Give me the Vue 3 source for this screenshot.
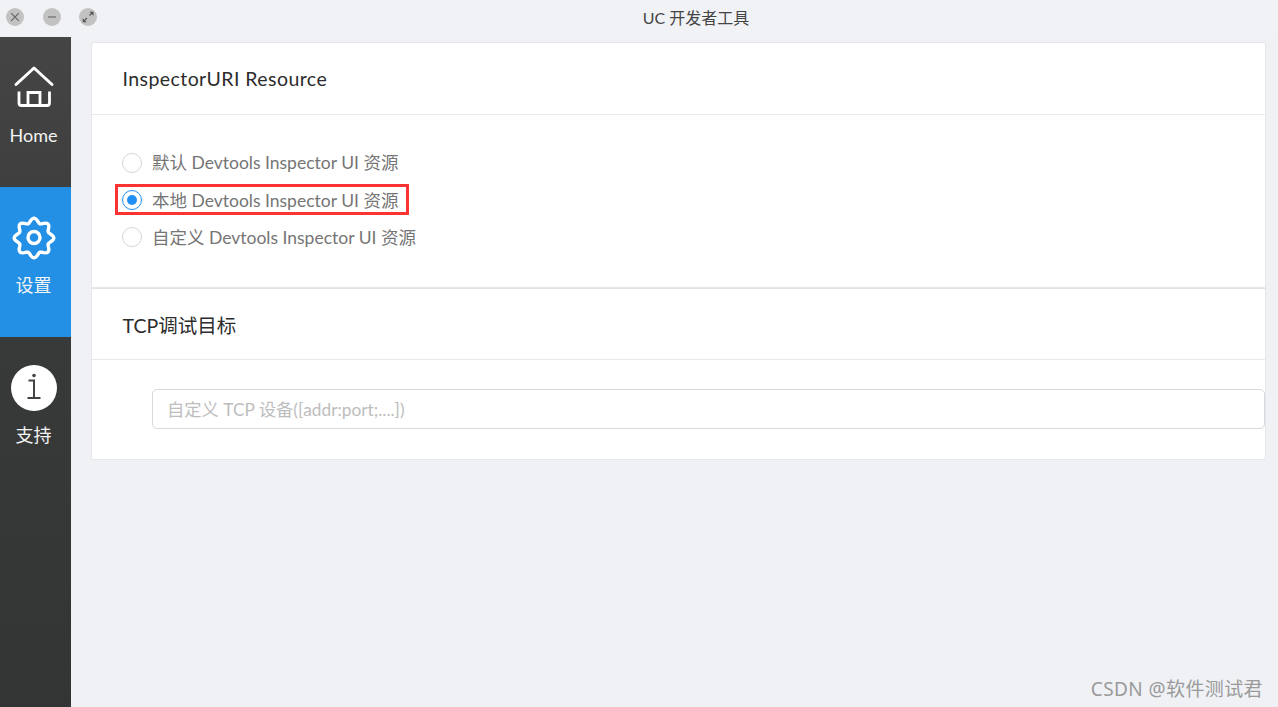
<script setup>
const navItems = [
  { key: 'home', label: 'Home' },
  { key: 'gear', label: '设置', active: true },
  { key: 'info', label: '支持' },
]
const radios = [
  { label: '默认 Devtools Inspector UI 资源' },
  { label: '本地 Devtools Inspector UI 资源', checked: true, marked: true },
  { label: '自定义 Devtools Inspector UI 资源' },
]
const gearPath = (() => {
  const pts = []
  for (let i = 0; i < 96; i++) {
    const a = (i / 96) * Math.PI * 2
    const r = 17.6 + 2.2 * Math.cos(8 * a)
    pts.push(`${(23 + r * Math.sin(a)).toFixed(2)} ${(23 - r * Math.cos(a)).toFixed(2)}`)
  }
  return 'M' + pts.join('L') + 'Z'
})()
</script>

<template>
  <div class="window">
    <header class="titlebar">
      <div class="lights">
        <span class="light">
          <svg width="18" height="18" viewBox="0 0 18 18"><path d="M5.2 5.2l7.6 7.6M12.8 5.2l-7.6 7.6" stroke="#666" stroke-width="1.2" fill="none"/></svg>
        </span>
        <span class="light">
          <svg width="18" height="18" viewBox="0 0 18 18"><path d="M5 9h8" stroke="#777" stroke-width="1.4" fill="none"/></svg>
        </span>
        <span class="light">
          <svg width="18" height="18" viewBox="0 0 18 18"><path d="M10.5 7.5l3-3M5 13l3-3" stroke="#555" stroke-width="1.1" fill="none"/><path d="M10.5 3.7h4v4zM3.7 10.2v4h4z" fill="#555"/></svg>
        </span>
      </div>
      <div class="title">UC 开发者工具</div>
    </header>
    <div class="body">
      <nav class="sidebar">
        <div v-for="item in navItems" :key="item.key" class="nav-item" :class="{ active: item.active }">
          <svg v-if="item.key === 'home'" class="nav-icon" width="46" height="46" viewBox="10.500 65 46 46" fill="none" stroke="#fff">
            <path d="M15.500 84.500L33.500 68L51.500 84.500" stroke-width="3" stroke-linecap="round" stroke-linejoin="round"/>
            <path d="M18.500 91.500V103Q18.500 105.500 21 105.500H46.500Q49 105.500 49 103V91.500" stroke-width="2.800"/>
            <path d="M27.500 105V92.500H39.500V105" stroke-width="2.800"/>
          </svg>
          <svg v-else-if="item.key === 'gear'" class="nav-icon" width="46" height="46" viewBox="0 0 46 46" fill="none" stroke="#fff" stroke-width="3.400">
            <path stroke-linejoin="round" :d="gearPath"/>
            <circle cx="23" cy="22.500" r="6"/>
          </svg>
          <svg v-else class="nav-icon" width="46" height="46" viewBox="10.500 364 46 46">
            <circle cx="33.500" cy="387" r="23" fill="#fff"/>
            <circle cx="33.500" cy="374.500" r="1.800" fill="#444"/>
            <path d="M28 379.500H33.500V397M27 397H40" stroke="#444" stroke-width="2" fill="none"/>
          </svg>
          <span class="nav-label">{{ item.label }}</span>
        </div>
      </nav>
      <main class="main">
        <section class="card first">
          <h2 class="card-title resource">InspectorURI Resource</h2>
          <div class="radio-list">
            <label v-for="r in radios" :key="r.label" class="radio-row" :class="{ marked: r.marked }">
              <span class="radio" :class="{ checked: r.checked }"></span>
              <span class="radio-text">{{ r.label }}</span>
            </label>
          </div>
        </section>
        <section class="card second">
          <h2 class="card-title">TCP调试目标</h2>
          <div class="input-wrap">
            <input class="tcp-input" type="text" placeholder="自定义 TCP 设备([addr:port;....])" />
          </div>
        </section>
        <div class="watermark">CSDN @软件测试君</div>
      </main>
    </div>
  </div>
</template>

<style>
html, body { margin: 0; padding: 0; background: #eff0f5; overflow: hidden; }
</style>

<style scoped>
.window {
  width: 1278px;
  height: 707px;
  display: flex;
  flex-direction: column;
  background: #eff1f5;
  font-family: Lato, "Noto Sans CJK SC", sans-serif;
  overflow: hidden;
}
.titlebar {
  height: 37px;
  flex: none;
  box-sizing: border-box;
  padding: 0 0 3px 114px;
  position: relative;
  display: flex;
  align-items: center;
  justify-content: center;
  background: #f1f2f6;
}
.lights {
  position: absolute;
  left: 6px;
  top: 8px;
  display: flex;
  gap: 18.500px;
}
.light {
  width: 18px;
  height: 18px;
  border-radius: 50%;
  background: #c2c2c2;
  display: block;
}
.light svg { display: block; }
.title {
  font-size: 16px;
  color: #444;
}
.body {
  flex: 1;
  display: flex;
  min-height: 0;
}
.sidebar {
  width: 71px;
  flex: none;
  background: linear-gradient(180deg, #444544 0%, #383a39 45%, #333534 100%);
}
.nav-item {
  height: 150px;
  box-sizing: border-box;
  padding: 28px 4px 0 0;
  display: flex;
  flex-direction: column;
  align-items: center;
  color: #fff;
}
.nav-item.active { background: #2390e6; }
.nav-icon { display: block; flex: none; overflow: visible; }
.nav-label {
  margin-top: 12px;
  font-size: 18px;
  line-height: 24px;
  color: #f4f4f4;
}
.main {
  flex: 1;
  position: relative;
  padding: 5px 12px 0 20px;
}
.card {
  background: #fff;
  box-sizing: border-box;
  border: 1px solid #e6e7ea;
}
.card.first {
  height: 246px;
  border-radius: 3px 3px 0 0;
}
.card.second {
  height: 172px;
  border-top: 1px solid #e2e3e6;
  border-radius: 0 0 3px 3px;
}
.card-title {
  margin: 0;
  height: 72px;
  box-sizing: border-box;
  padding: 0 0 0 30.500px;
  display: flex;
  align-items: center;
  font-size: 19.500px;
  font-weight: 400;
  color: #2c2c2c;
  border-bottom: 1px solid #e8e9ec;
}
.card-title.resource { letter-spacing: 0.430px; }
.second .card-title { height: 71px; }
.radio-list {
  padding-top: 29px;
  display: flex;
  flex-direction: column;
}
.radio-row {
  position: relative;
  height: 37.400px;
  display: flex;
  align-items: center;
  padding-left: 30px;
}
.radio-row.marked::after {
  content: "";
  position: absolute;
  left: 23px;
  top: 3px;
  width: 294px;
  height: 31px;
  box-sizing: border-box;
  border: 3px solid #fb3333;
}
.radio {
  width: 20px;
  height: 20px;
  box-sizing: border-box;
  border: 1px solid #d6d7da;
  border-radius: 50%;
  flex: none;
  background: #fff;
  display: flex;
  align-items: center;
  justify-content: center;
}
.radio.checked { border-color: #2090f5; }
.radio.checked::before {
  content: "";
  width: 10px;
  height: 10px;
  border-radius: 50%;
  background: #2090f5;
}
.radio-text {
  margin: 0 0 2px 10px;
  font-size: 17.500px;
  color: #757575;
  white-space: nowrap;
}
.input-wrap {
  padding: 29px 0 0 60px;
}
.tcp-input {
  display: block;
  width: 100%;
  height: 40px;
  box-sizing: border-box;
  border: 1px solid #d9d9dc;
  border-radius: 5px;
  padding: 0 14px;
  font: inherit;
  font-size: 17.300px;
  background: #fff;
  outline: none;
}
.tcp-input::placeholder { color: #bdbdbd; opacity: 1; }
.watermark {
  position: absolute;
  right: 15px;
  bottom: 5px;
  font-family: "Noto Sans", "Noto Sans CJK SC", sans-serif;
  font-size: 19px;
  color: #9a9a9a;
  letter-spacing: 0.400px;
}
</style>
